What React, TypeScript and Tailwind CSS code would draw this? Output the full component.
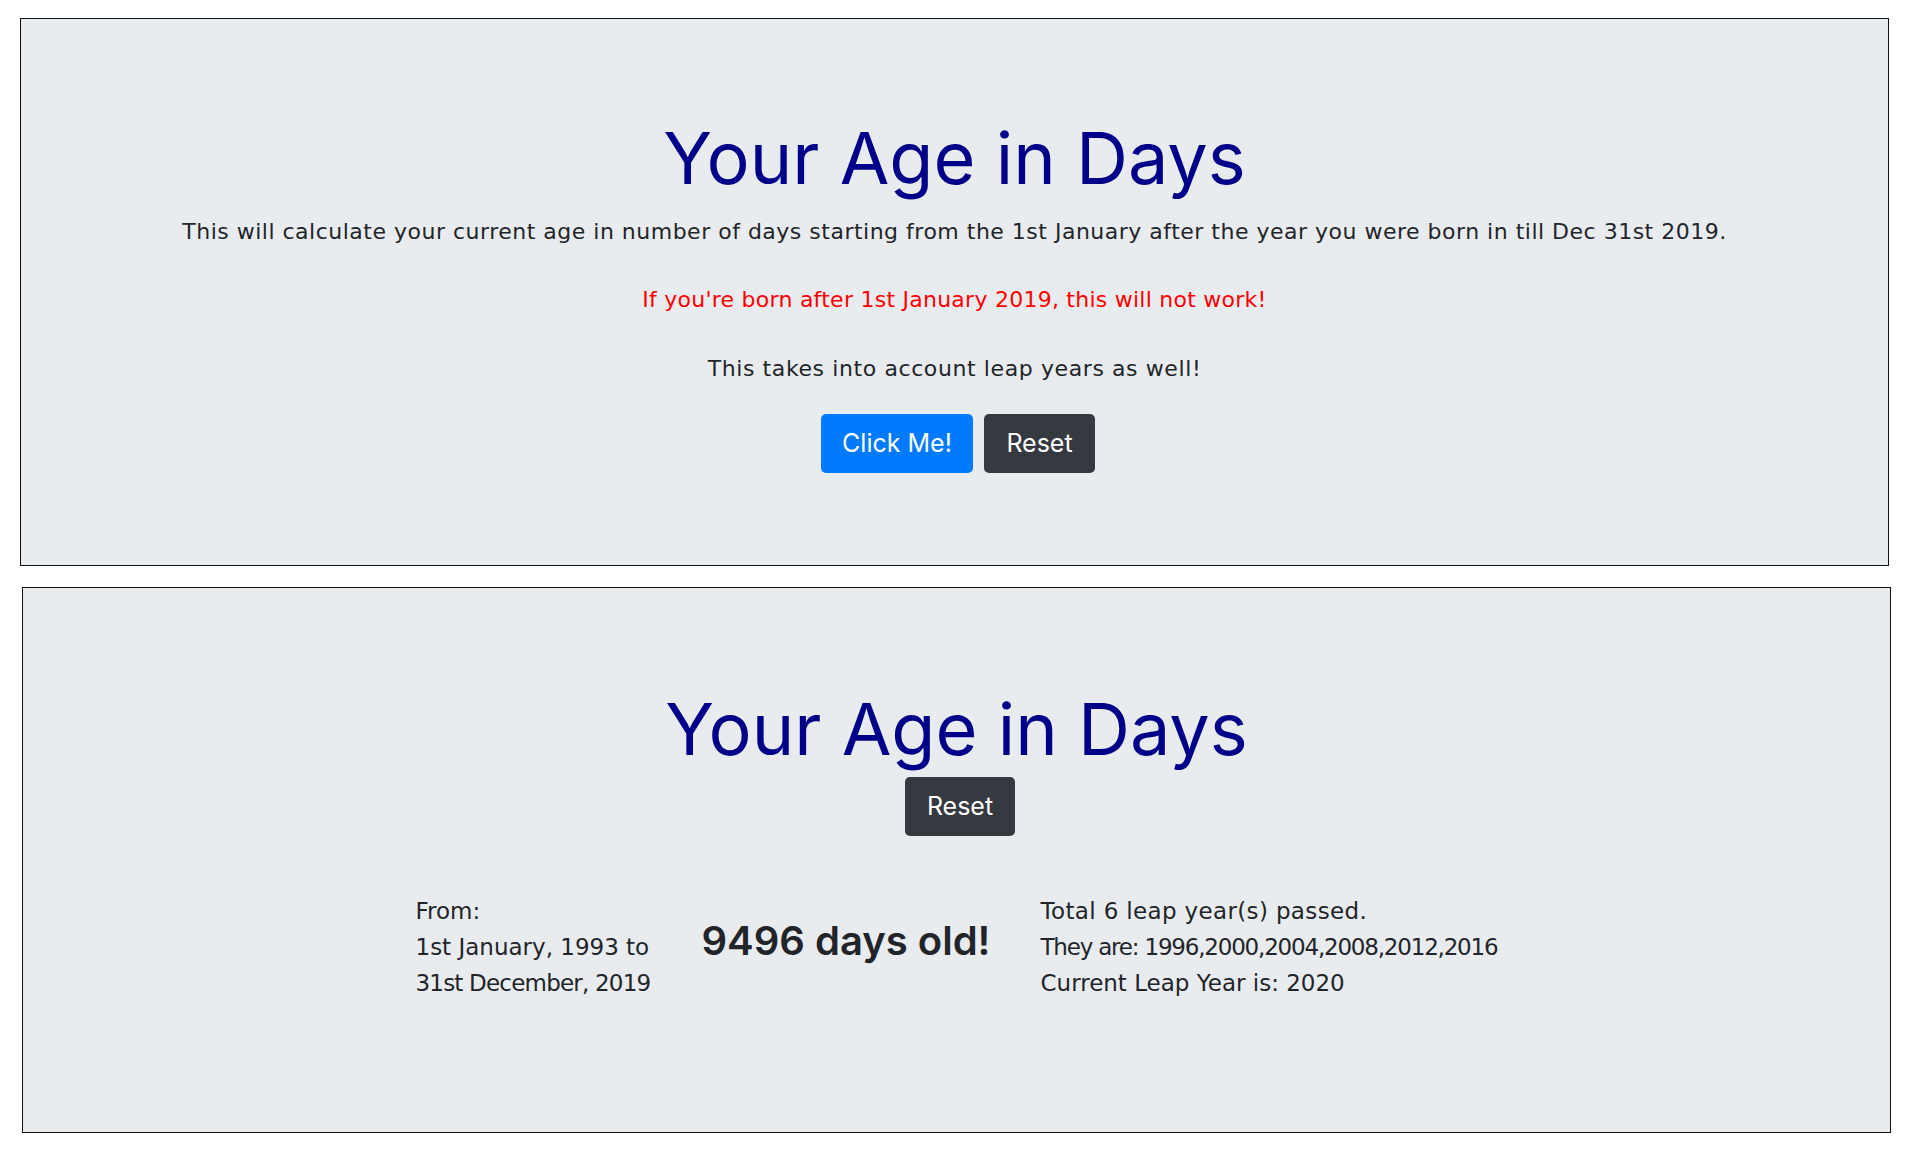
import React from 'react';

const titleFont = { fontFamily: 'Inter, "Noto Sans", sans-serif' };
const bodyFont = { fontFamily: '"DejaVu Sans", "Noto Sans", sans-serif' };

export default function App() {
  return (
    <div className="min-h-screen bg-white pt-[18px] pb-[20px] text-[#212529]" style={bodyFont}>
      {/* intro card */}
      <section className="ml-[20px] w-[1869px] h-[548px] border border-[#111] bg-[#e9ecef] flex flex-col items-center pt-[96px]">
        <h1 className="text-[72px] leading-[86px] font-normal text-[#000088]" style={titleFont}>Your Age in Days</h1>
        <p className="mt-[15px] text-[22px] leading-[32px] tracking-[0.5px] whitespace-nowrap">
          This will calculate your current age in number of days starting from the 1st January after the year you were born in till Dec 31st 2019.
        </p>
        <p className="mt-[36px] text-[22px] leading-[32px] tracking-[0.25px] text-[#ff0000]">
          If you're born after 1st January 2019, this will not work!
        </p>
        <p className="mt-[37px] text-[22px] leading-[32px] tracking-[0.6px]">This takes into account leap years as well!</p>
        <div className="mt-[29px] flex gap-[11px] pl-[7px]" style={titleFont}>
          <button className="w-[152px] h-[59px] rounded-[5px] bg-[#007bff] text-white text-[25px]">Click Me!</button>
          <button className="w-[111px] h-[59px] rounded-[5px] bg-[#343a40] text-white text-[25px]">Reset</button>
        </div>
      </section>

      {/* result card */}
      <section className="ml-[22px] mt-[21px] w-[1869px] h-[546px] border border-[#111] bg-[#e9ecef] flex flex-col items-center pt-[98px]">
        <h1 className="text-[72px] leading-[86px] font-normal text-[#000088]" style={titleFont}>Your Age in Days</h1>
        <div className="mt-[5px] pl-[7px]" style={titleFont}>
          <button className="w-[110px] h-[59px] rounded-[5px] bg-[#343a40] text-white text-[25px]">Reset</button>
        </div>
        <div className="mt-[57px] flex items-start whitespace-nowrap">
          <div className="w-[286px] text-[23px] leading-[36px]">
            <div>From:</div>
            <div>1st January, 1993 to</div>
            <div className="tracking-[-0.8px]">31st December, 2019</div>
          </div>
          <div className="w-[339px] mt-[23px] text-[40px] leading-[50px] font-semibold" style={titleFont}>9496 days old!</div>
          <div className="w-[457px] text-[23px] leading-[36px]">
            <div className="tracking-[0.35px]">Total 6 leap year(s) passed.</div>
            <div className="tracking-[-1.2px]">They are: 1996,2000,2004,2008,2012,2016</div>
            <div>Current Leap Year is: 2020</div>
          </div>
        </div>
      </section>
    </div>
  );
}
